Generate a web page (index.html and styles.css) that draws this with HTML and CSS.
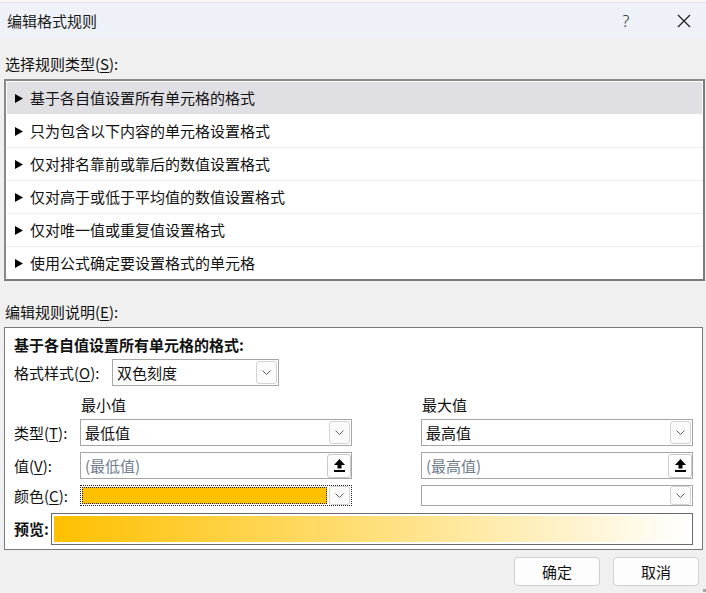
FILE: index.html
```html
<!DOCTYPE html>
<html lang="zh-CN">
<head>
    <meta charset="UTF-8">
    <title>编辑格式规则</title>
    <link rel="stylesheet" href="styles.css">
</head>
<body>

<div class="dialog">
    <div class="host-strip"></div>

    <!-- 标题栏 -->
    <header class="titlebar">
        <span class="title">编辑格式规则</span>
        <span class="cap-btn help">?</span>
        <span class="cap-btn close">
            <svg width="14" height="14" viewBox="0 0 14 14"><path d="M1 1 L13 13 M13 1 L1 13" stroke="#1a1a1a" stroke-width="1.2" fill="none"/></svg>
        </span>
    </header>

    <main class="content">
        <div class="section-label">选择规则类型(<u>S</u>):</div>

        <ul class="rule-list">
            <li class="rule selected"><svg class="arrow" width="8" height="9" viewBox="0 0 8 9"><path d="M0 0 L8 4.5 L0 9 Z"/></svg>基于各自值设置所有单元格的格式</li>
            <li class="rule"><svg class="arrow" width="8" height="9" viewBox="0 0 8 9"><path d="M0 0 L8 4.5 L0 9 Z"/></svg>只为包含以下内容的单元格设置格式</li>
            <li class="rule"><svg class="arrow" width="8" height="9" viewBox="0 0 8 9"><path d="M0 0 L8 4.5 L0 9 Z"/></svg>仅对排名靠前或靠后的数值设置格式</li>
            <li class="rule"><svg class="arrow" width="8" height="9" viewBox="0 0 8 9"><path d="M0 0 L8 4.5 L0 9 Z"/></svg>仅对高于或低于平均值的数值设置格式</li>
            <li class="rule"><svg class="arrow" width="8" height="9" viewBox="0 0 8 9"><path d="M0 0 L8 4.5 L0 9 Z"/></svg>仅对唯一值或重复值设置格式</li>
            <li class="rule"><svg class="arrow" width="8" height="9" viewBox="0 0 8 9"><path d="M0 0 L8 4.5 L0 9 Z"/></svg>使用公式确定要设置格式的单元格</li>
        </ul>

        <div class="section-label second">编辑规则说明(<u>E</u>):</div>

        <div class="rule-box">
            <div class="rule-heading">基于各自值设置所有单元格的格式:</div>

            <div class="style-row">
                <span class="style-label">格式样式(<u>O</u>):</span>
                <div class="combo style-combo">
                    <span class="combo-text">双色刻度</span>
                    <span class="drop-btn"><svg width="9" height="5" viewBox="0 0 9 5"><path d="M0.5 0.5 L4.5 4.5 L8.5 0.5" fill="none" stroke="#606060"/></svg></span>
                </div>
            </div>

            <!-- 最小值 / 最大值 -->
            <div class="scale-grid">
                <span></span>
                <span class="col-head">最小值</span>
                <span></span>
                <span class="col-head">最大值</span>

                <span class="row-label">类型(<u>T</u>):</span>
                <div class="combo">
                    <span class="combo-text">最低值</span>
                    <span class="drop-btn"><svg width="9" height="5" viewBox="0 0 9 5"><path d="M0.5 0.5 L4.5 4.5 L8.5 0.5" fill="none" stroke="#606060"/></svg></span>
                </div>
                <span></span>
                <div class="combo">
                    <span class="combo-text">最高值</span>
                    <span class="drop-btn"><svg width="9" height="5" viewBox="0 0 9 5"><path d="M0.5 0.5 L4.5 4.5 L8.5 0.5" fill="none" stroke="#606060"/></svg></span>
                </div>

                <span class="row-label">值(<u>V</u>):</span>
                <div class="combo">
                    <span class="combo-text placeholder">(最低值)</span>
                    <span class="ref-btn"><svg width="11" height="13" viewBox="0 0 11 13"><path d="M5.5 0 L11 6 L7.5 6 L7.5 9.5 L3.5 9.5 L3.5 6 L0 6 Z"/><rect x="0" y="11" width="11" height="2"/></svg></span>
                </div>
                <span></span>
                <div class="combo">
                    <span class="combo-text placeholder">(最高值)</span>
                    <span class="ref-btn"><svg width="11" height="13" viewBox="0 0 11 13"><path d="M5.5 0 L11 6 L7.5 6 L7.5 9.5 L3.5 9.5 L3.5 6 L0 6 Z"/><rect x="0" y="11" width="11" height="2"/></svg></span>
                </div>

                <span class="row-label">颜色(<u>C</u>):</span>
                <div class="combo color-combo focused">
                    <span class="swatch"></span>
                    <span class="drop-btn"><svg width="9" height="5" viewBox="0 0 9 5"><path d="M0.5 0.5 L4.5 4.5 L8.5 0.5" fill="none" stroke="#606060"/></svg></span>
                </div>
                <span></span>
                <div class="combo color-combo">
                    <span class="swatch empty"></span>
                    <span class="drop-btn"><svg width="9" height="5" viewBox="0 0 9 5"><path d="M0.5 0.5 L4.5 4.5 L8.5 0.5" fill="none" stroke="#606060"/></svg></span>
                </div>
            </div>

            <div class="preview-row">
                <span class="preview-label">预览:</span>
                <div class="preview"><div class="preview-fill"></div></div>
            </div>
        </div>

        <div class="buttons">
            <button class="btn">确定</button>
            <button class="btn">取消</button>
        </div>
    </main>
    <div class="grip"></div>
</div>

</body>
</html>
```

FILE: styles.css
```css
/* 基础 */
* {
    margin: 0;
    padding: 0;
    box-sizing: border-box;
}
body {
    width: 706px;
    height: 593px;
    overflow: hidden;
    background-color: #f0f0f0;
    font-family: "Noto Sans CJK SC", "Noto Sans", sans-serif;
    font-size: 15px;
    color: #111;
}
u {
    text-decoration: underline;
    text-underline-offset: 2px;
}
.dialog {
    position: relative;
    width: 706px;
    height: 593px;
}
.host-strip {
    height: 3px;
    background-color: #f7f7f7;
    border-bottom: 1px solid #e4e4e4;
}
/* 标题栏 */
.titlebar {
    height: 35px;
    display: flex;
    align-items: center;
    padding-left: 7px;
    background-color: #eef2f8;
    color: #1a1a1a;
}
.title {
    flex: 1;
    line-height: 20px;
}
.cap-btn {
    width: 46px;
    height: 35px;
    display: flex;
    align-items: center;
    justify-content: center;
    font-family: "Noto Sans", sans-serif;
    font-size: 16px;
    font-weight: 300;
}
.cap-btn.help {
    margin-right: 12px;
}
.cap-btn.close {
    margin-right: -1px;
}
/* 内容 */
.content {
    padding: 0 1px 0 4px;
}
.section-label {
    margin-top: 16px;
    line-height: 20px;
    padding-left: 1px;
}
.section-label.second {
    margin-top: 21px;
}
/* 规则类型列表 */
.rule-list {
    list-style: none;
    margin-top: 5px;
    background-color: #fff;
    border: 2px solid #7b7b7b;
    border-top-color: #8a8a8a;
    border-left-color: #8a8a8a;
    padding: 1px 1px 0 1px;
}
.rule {
    height: 33px;
    display: flex;
    align-items: center;
    padding-left: 8px;
    border-bottom: 1px solid #eeeeee;
    line-height: 32px;
}
.rule:last-child {
    border-bottom: none;
    height: 32px;
}
.rule.selected {
    background-color: #e0dfe4;
    border-bottom-color: #fff;
}
.arrow {
    margin-right: 7px;
    fill: #000;
}
/* 规则说明 */
.rule-box {
    margin-top: 5px;
    margin-right: 2px;
    background-color: #fff;
    border: 1px solid #7a7a7a;
    padding: 7px 0 4px 9px;
}
.rule-heading {
    font-weight: bold;
    line-height: 20px;
}
.style-row {
    margin-top: 4px;
    display: flex;
    align-items: center;
}
.style-label {
    width: 98px;
    line-height: 20px;
}
.combo {
    position: relative;
    height: 27px;
    display: flex;
    align-items: center;
    background-color: #fff;
    border: 1px solid #a6a6a6;
}
.style-combo {
    width: 167px;
}
.combo-text {
    flex: 1;
    padding-left: 4px;
    line-height: 20px;
}
.combo-text.placeholder {
    color: #6f7c8c;
}
.drop-btn {
    width: 21px;
    height: 23px;
    margin-right: 1px;
    display: flex;
    align-items: center;
    justify-content: center;
    background-color: #fbfbfb;
    border: 1px solid #d3d3d3;
    border-radius: 3px;
}
.ref-btn {
    width: 24px;
    height: 24px;
    margin-right: 0;
    display: flex;
    align-items: center;
    justify-content: center;
    background-color: #fdfdfd;
    border: 1px solid #c9c9c9;
    border-radius: 3px;
    fill: #000;
}
.scale-grid {
    margin-top: 7px;
    display: grid;
    grid-template-columns: 66px 272px 69px 272px;
    grid-template-rows: 20px 27px 27px 21px;
    row-gap: 6px;
    align-items: center;
}
.col-head {
    align-self: end;
    line-height: 16px;
    padding-left: 1px;
}
.row-label {
    line-height: 20px;
}
.color-combo {
    height: 21px;
    padding: 1px;
}
.color-combo.focused {
    border: 1px dotted #222;
}
.swatch {
    flex: 1;
    height: 17px;
    margin-right: 2px;
    background-color: #ffc000;
    border: 1px dotted #1c2a6e;
}
.swatch.empty {
    background-color: #fff;
    border: none;
}
.color-combo .drop-btn {
    height: 19px;
    margin-right: 0;
}
/* 预览 */
.preview-row {
    margin-top: 7px;
    display: flex;
    align-items: center;
}
.preview-label {
    width: 37px;
    font-weight: bold;
    line-height: 20px;
}
.preview {
    width: 642px;
    height: 32px;
    padding: 2px;
    background-color: #fff;
    border: 1px solid #6b6b6b;
}
.preview-fill {
    height: 100%;
    background: linear-gradient(to right, #ffc000, #ffdf7a 50%, #fff);
}
/* 按钮 */
.buttons {
    margin-top: 7px;
    display: flex;
    justify-content: flex-end;
    gap: 13px;
    padding-right: 6px;
}
.btn {
    width: 86px;
    height: 29px;
    font-family: inherit;
    font-size: 15px;
    color: #111;
    background-color: #fdfdfd;
    border: 1px solid #d0d0d0;
    border-radius: 4px;
}
.grip {
    position: absolute;
    right: 0;
    bottom: 1px;
    width: 3px;
    height: 3px;
    background-color: #a8a8a8;
}
```
